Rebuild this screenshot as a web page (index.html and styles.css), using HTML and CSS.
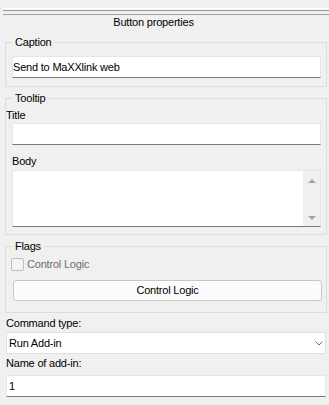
FILE: index.html
```html
<!DOCTYPE html>
<html>
<head>
<meta charset="utf-8">
<title>Button properties</title>
<link rel="stylesheet" href="styles.css">
</head>
<body>
<div class="panel">
  <div class="rule"></div>
  <div class="heading">Button properties</div>

  <fieldset class="group group-caption">
    <legend>Caption</legend>
    <input class="field" type="text" value="Send to MaXXlink web">
  </fieldset>

  <fieldset class="group group-tooltip">
    <legend>Tooltip</legend>
    <label class="lbl lbl-title">Title</label>
    <input class="field field-title" type="text" value="">
    <label class="lbl lbl-body">Body</label>
    <div class="memo">
      <div class="memo-text"></div>
      <div class="memo-scroll">
        <span class="arrow arrow-up"></span>
        <span class="arrow arrow-down"></span>
      </div>
    </div>
  </fieldset>

  <fieldset class="group group-flags">
    <legend>Flags</legend>
    <div class="check-row">
      <span class="checkbox"></span>
      <span class="check-label">Control Logic</span>
    </div>
    <button class="btn" type="button">Control Logic</button>
  </fieldset>

  <label class="lbl outer lbl-command">Command type:</label>
  <div class="combo outer">
    <span class="combo-text">Run Add-in</span>
    <svg class="chevron" width="8" height="5" viewBox="0 0 8 5"><path d="M0.5 0.5 L4 4 L7.5 0.5" fill="none" stroke="#707070" stroke-width="1"/></svg>
  </div>

  <label class="lbl outer lbl-name">Name of add-in:</label>
  <input class="field outer field-name" type="text" value="1">
</div>
</body>
</html>
```

FILE: styles.css
```css
* {
  box-sizing: border-box;
}

html, body {
  margin: 0;
  padding: 0;
  background: #f0f0f0;
}

body {
  width: 329px;
  height: 405px;
  overflow: hidden;
  font-family: "Liberation Sans", Arial, sans-serif;
  font-size: 11px;
  line-height: 13px;
  color: #000;
  letter-spacing: -0.2px;
}

.panel {
  display: flex;
  flex-direction: column;
}

.rule {
  margin: 8px 0 0 3px;
  height: 7px;
  border-top: 1px solid #ffffff;
  background: linear-gradient(#f0f0f0 0 1px, #a0a0a0 1px 2px, #e6e6e6 2px 3px, #f0f0f0 3px 5px, #a0a0a0 5px 6px);
}

.heading {
  margin-top: 1px;
  padding-right: 22px;
  text-align: center;
}

.group {
  margin: 0 2px 0 5px;
  border: 1px solid #dcdcdc;
  padding: 7px 5px 8px 6px;
  min-width: 0;
}

.group legend {
  padding: 0 2px 0 3px;
  margin: 0;
  line-height: 13px;
}

.group-caption {
  margin-top: 7px;
}

.group-tooltip {
  margin-top: 5px;
  padding-top: 4px;
  padding-bottom: 7px;
}

.group-flags {
  margin-top: 5px;
  padding-top: 4px;
  padding-bottom: 11px;
}

.lbl {
  display: block;
}

.lbl-title {
  margin-left: -6px;
}

.field {
  display: block;
  width: 100%;
  height: 22px;
  margin: 0;
  padding: 0 0 1px 0;
  border: 1px solid #e6e6e6;
  border-bottom-color: #7a7a7a;
  background: #fff;
  font: inherit;
  letter-spacing: inherit;
  color: #000;
  outline: none;
}

.field-title {
  margin-top: 1px;
}

.lbl-body {
  margin-top: 10px;
  margin-bottom: 2px;
}

.memo {
  display: flex;
  height: 57px;
  border: 1px solid #e6e6e6;
  border-bottom-color: #7a7a7a;
  background: #fff;
}

.memo-text {
  flex: 1;
}

.memo-scroll {
  width: 17px;
  background: #f0f0f0;
  display: flex;
  flex-direction: column;
  align-items: center;
  justify-content: space-between;
  padding: 8px 0 6px;
}

.arrow {
  width: 0;
  height: 0;
  border-left: 4px solid transparent;
  border-right: 4px solid transparent;
}

.arrow-up {
  border-bottom: 4px solid #a3a3a3;
}

.arrow-down {
  border-top: 4px solid #a3a3a3;
}

.check-row {
  display: flex;
  align-items: center;
  height: 14px;
  margin-left: -1px;
}

.checkbox {
  width: 13px;
  height: 13px;
  border: 1px solid #bcbcbc;
  border-radius: 2px;
  background: #f4f4f4;
}

.check-label {
  margin-left: 3px;
  color: #6d6d6d;
}

.btn {
  display: block;
  width: 100%;
  height: 21px;
  margin: 9px 0 0 1px;
  padding: 0;
  border: 1px solid #c8c8c8;
  border-radius: 3px;
  background: #fcfcfc;
  font: inherit;
  letter-spacing: inherit;
  color: #000;
  text-align: center;
}

.outer {
  margin-left: 6px;
  margin-right: 3px;
}

.lbl-command {
  margin-top: 4px;
}

.combo {
  margin-top: 2px;
  height: 22px;
  display: flex;
  align-items: center;
  justify-content: space-between;
  padding: 0 2px 0 2px;
  border: 1px solid #e0e0e0;
  background: #fff;
}

.chevron {
  display: block;
}

.lbl-name {
  margin-top: 3px;
}

.field-name {
  width: auto;
  margin-top: 5px;
  padding-left: 2px;
}
```
